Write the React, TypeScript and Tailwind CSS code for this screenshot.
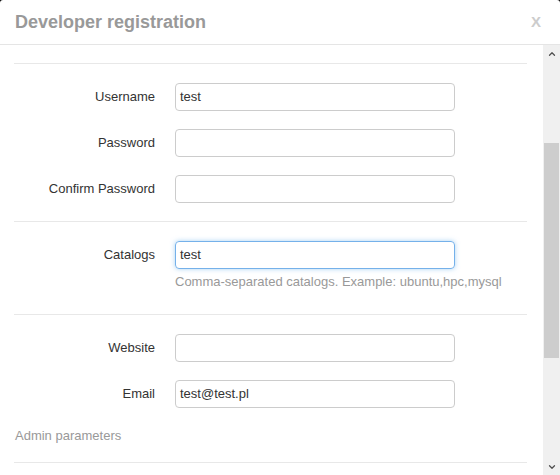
import { ChevronUp, ChevronDown } from "lucide-react";

const Field = ({
  label,
  value,
  focused,
  help,
}: {
  label: string;
  value?: string;
  focused?: boolean;
  help?: string;
}) => (
  <div className="flex items-start">
    <label className="w-[141px] h-[28px] flex items-center justify-end text-[13px] text-[#333]">
      {label}
    </label>
    <div className="ml-[20px]">
      <div
        className={
          focused
            ? "w-[280px] h-[28px] flex items-center px-[4px] rounded-[4px] border border-[#75b1ea] shadow-[0_0_5px_rgba(102,175,233,0.55)] text-[13px] text-[#333]"
            : "w-[280px] h-[28px] flex items-center px-[4px] rounded-[4px] border border-[#ccc] text-[13px] text-[#333]"
        }
      >
        {value}
      </div>
      {help && <p className="mt-[3px] text-[13px] text-[#999]">{help}</p>}
    </div>
  </div>
);

const Divider = () => <div className="h-px bg-[#e8e8e8]" />;

const App = () => {
  return (
    <div className="w-[560px] h-[475px] bg-black font-['Liberation_Sans',Arial,sans-serif]">
      <div className="w-[560px] h-[475px] bg-white rounded-t-[3px] flex flex-col overflow-hidden">
        <div className="h-[45px] shrink-0 flex items-center justify-between pl-[15px] pr-[19px] border-b border-[#e5e5e5]">
          <h1 className="text-[18px] font-bold text-[#999]">Developer registration</h1>
          <span className="text-[15px] font-bold text-[#ccc]">X</span>
        </div>

        <div className="flex flex-1 min-h-0">
          <div className="flex-1 pl-[14px] pr-[16px] pt-[18px]">
            <Divider />
            <div className="pt-[19px] pb-[18px] flex flex-col gap-[18px]">
              <Field label="Username" value="test" />
              <Field label="Password" />
              <Field label="Confirm Password" />
            </div>
            <Divider />
            <div className="pt-[19px] h-[92px]">
              <Field
                label="Catalogs"
                value="test"
                focused
                help="Comma-separated catalogs. Example: ubuntu,hpc,mysql"
              />
            </div>
            <Divider />
            <div className="pt-[19px] flex flex-col gap-[18px]">
              <Field label="Website" />
              <Field label="Email" value="test@test.pl" />
            </div>
            <p className="mt-[18px] pl-px text-[13px] text-[#999]">Admin parameters</p>
            <div className="mt-[16px]">
              <Divider />
            </div>
          </div>

          <div className="w-[17px] shrink-0 bg-[#f0f0f0] flex flex-col items-center">
            <div className="h-[17px] flex items-center justify-center text-[#505050]">
              <ChevronUp size={10} strokeWidth={3} />
            </div>
            <div className="h-[81px]" />
            <div className="w-[15px] h-[215px] bg-[#cdcdcd]" />
            <div className="flex-1" />
            <div className="h-[17px] flex items-center justify-center text-[#505050]">
              <ChevronDown size={10} strokeWidth={3} />
            </div>
          </div>
        </div>
      </div>
    </div>
  );
};

export default App;
